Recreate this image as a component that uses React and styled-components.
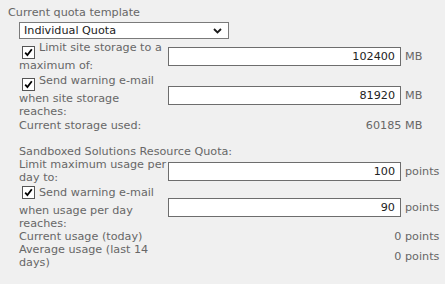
import React from 'react';
import styled, { createGlobalStyle } from 'styled-components';

const Global = createGlobalStyle`
  html, body { margin: 0; padding: 0; background: #f0f0f0; }
  body {
    font-family: "DejaVu Sans", Verdana, sans-serif;
    font-size: 11.2px;
    color: #676767;
  }
`;

const Page = styled.div`
  padding: 6px 0 0 8px;
`;

const Heading = styled.div`
  line-height: 13px;
`;

const Select = styled.div`
  margin: 3px 0 0 11px;
  width: 210px;
  height: 17px;
  box-sizing: border-box;
  border: 1px solid #7a7a7a;
  background: #fff;
  color: #222;
  display: flex;
  align-items: center;
  justify-content: space-between;
  padding: 0 6px 0 4px;
  line-height: 13px;
`;

const Form = styled.div`
  margin: ${p => p.$top || 0}px 0 0 11px;
  display: grid;
  grid-template-columns: 149px 233px auto;
  align-items: center;
  width: max-content;
`;

const Label = styled.div`
  line-height: 13px;
  white-space: nowrap;
  padding-top: ${p => p.$pad || 0}px;
`;

const CheckLine = styled.div`
  display: flex;
  align-items: flex-start;
  height: 18px;
`;

const Title = styled.div`
  grid-column: 1 / -1;
  line-height: 13px;
`;

const Box = styled.span`
  flex: none;
  position: relative;
  box-sizing: border-box;
  width: 13px;
  height: 13px;
  border: 1px solid #555;
  background: #fff;
  margin: ${p => p.$offset}px 4px 0 3px;
  svg { position: absolute; left: 1px; top: 1px; }
`;

const Field = styled.input`
  width: 233px;
  height: 19px;
  box-sizing: border-box;
  border: 1px solid #6d6d6d;
  background: #fff;
  color: #222;
  font: 11.2px "DejaVu Sans", Verdana, sans-serif;
  text-align: right;
  padding: 0 5px 0 4px;
  margin: 0;
  outline: none;
`;

const Unit = styled.div`
  padding-left: 4px;
  line-height: 13px;
`;

const Value = styled.div`
  grid-column: 2 / 4;
  text-align: right;
  line-height: 13px;
`;

const Check = ({ offset }) => (
  <Box role="checkbox" aria-checked="true" $offset={offset}>
    <svg width="9" height="9" viewBox="0 0 9 9">
      <path d="M1.2 4.6 L3.4 7 L7.8 1.3" fill="none" stroke="#000" strokeWidth="1.8" />
    </svg>
  </Box>
);

const Chevron = () => (
  <svg width="9" height="6" viewBox="0 0 9 6">
    <path d="M1 1 L4.5 4.5 L8 1" fill="none" stroke="#1a1a1a" strokeWidth="1.8" />
  </svg>
);

export default function App() {
  return (
    <Page>
      <Global />
      <Heading>Current quota template</Heading>
      <Select role="combobox">
        <span>Individual Quota</span>
        <Chevron />
      </Select>
      <Form $top={2}>
        <Label>
          <CheckLine><Check offset={5} />Limit site storage to a</CheckLine>
          maximum of:
        </Label>
        <Field readOnly value="102400" />
        <Unit>MB</Unit>

        <Label $pad={2}>
          <CheckLine><Check offset={4} />Send warning e-mail</CheckLine>
          when site storage<br />reaches:
        </Label>
        <Field readOnly value="81920" />
        <Unit>MB</Unit>

        <Label $pad={1}>Current storage used:</Label>
        <Value>60185 MB</Value>
      </Form>

      <Form $top={13}>
        <Title>Sandboxed Solutions Resource Quota:</Title>
        <Label>Limit maximum usage per<br />day to:</Label>
        <Field readOnly value="100" />
        <Unit>points</Unit>

        <Label $pad={2}>
          <CheckLine><Check offset={0} />Send warning e-mail</CheckLine>
          when usage per day<br />reaches:
        </Label>
        <Field readOnly value="90" />
        <Unit>points</Unit>

        <Label>Current usage (today)</Label>
        <Value>0 points</Value>

        <Label>Average usage (last 14<br />days)</Label>
        <Value>0 points</Value>
      </Form>
    </Page>
  );
}
